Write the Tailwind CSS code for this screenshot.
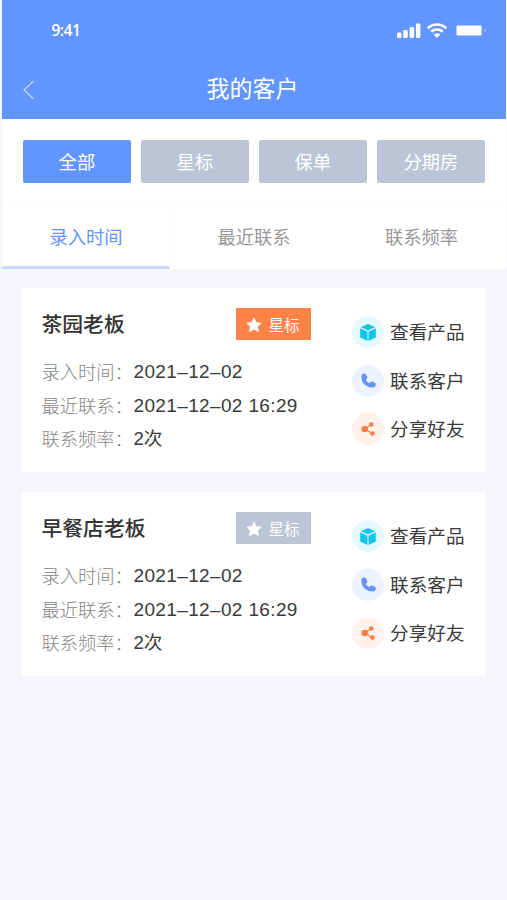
<!DOCTYPE html>
<html lang="zh-CN">
<head>
  <meta charset="UTF-8" />
  <meta name="viewport" content="width=device-width, initial-scale=1.0" />
  <title>我的客户</title>
  <script src="https://cdn.jsdelivr.net/npm/@tailwindcss/browser@4"></script>
</head>
<body class="bg-[#f4f6fb] font-['Noto_Sans_CJK_SC',sans-serif] text-[#333]">
  <!-- Shared icons -->
  <svg class="hidden">
    <symbol id="star" viewBox="0 0 16 16"><path fill="currentColor" stroke="currentColor" stroke-linejoin="round" d="M8 1l2.1 4.6 5 .6-3.7 3.4 1 4.9L8 12.1l-4.4 2.4 1-4.9L.9 6.2l5-.6z" /></symbol>
    <symbol id="box" viewBox="0 0 16 17"><path fill="currentColor" d="M8 0l7.200 3.200L8 6.600.8 3.200zM.2 4.300l7.300 3.400V17L.2 13.600zM15.800 4.300L8.500 7.700V17l7.300-3.400z" /></symbol>
    <symbol id="phone" viewBox="0 0 16 16"><path fill="none" stroke="currentColor" stroke-width="4" stroke-linecap="round" d="M2.500 4.500c0 5 4 9 9.500 9" /><path fill="none" stroke="currentColor" stroke-width="5.200" stroke-linecap="round" d="M3.300 3.200l.8 1.600M11.400 11.800l1.700.8" /></symbol>
    <symbol id="share" viewBox="0 0 14 14"><path fill="none" stroke="currentColor" stroke-width="1.200" d="M10.500 2.300L4 7l7 4.500" /><g fill="currentColor"><circle cx="3.700" cy="7" r="3.200" /><circle cx="10.300" cy="2.500" r="2.300" /><circle cx="11.400" cy="11.500" r="2.300" /></g></symbol>
  </svg>

  <div class="mx-auto h-[900px] w-[504px]">
    <!-- Header -->
    <header class="h-[119px] bg-[#6295ff] text-white">
      <div class="flex h-[60px] items-center justify-between pl-[50px] pr-[19px] pt-px">
        <span class="font-['Open_Sans',sans-serif] text-[15.5px] font-semibold tracking-[-0.5px]">9:41</span>
        <div class="flex items-center gap-[6px]">
          <svg class="h-[15px] w-6" viewBox="0 0 24 15" fill="currentColor">
            <rect x="0" y="9.500" width="4.500" height="5.500" rx="1.300" />
            <rect x="6.300" y="7" width="4.500" height="8" rx="1.300" />
            <rect x="12.600" y="4" width="4.500" height="11" rx="1.300" />
            <rect x="18.900" y="0.500" width="4.500" height="14.500" rx="1.300" />
          </svg>
          <svg class="h-[15px] w-5" viewBox="0 0 20 15" fill="none" stroke="currentColor" stroke-width="2.600">
            <path d="M.9 5.300C6 .300 14 .300 19.100 5.300" />
            <path d="M4.200 8.800c3.300-3.200 8.300-3.200 11.600 0" />
            <path fill="currentColor" stroke="none" d="M6.700 11.400c2-1.600 4.600-1.600 6.600 0L10 15z" />
          </svg>
          <svg class="h-[15px] w-[34px]" viewBox="0 0 34 15">
            <rect x="1" y=".5" width="29" height="14" rx="3" fill="none" stroke="#6b9bff" />
            <rect x="3.500" y="2.500" width="25" height="10" rx="1" fill="#fff" />
            <path d="M31.500 5.500c1.800.7 1.800 3.300 0 4z" fill="#a8c4ff" />
          </svg>
        </div>
      </div>
      <div class="grid h-[55px] grid-cols-[1fr_auto_1fr] items-center">
        <svg class="ml-[21px] mt-[5px] h-5 w-3" viewBox="0 0 12 20" fill="none" stroke="#c5d7ff" stroke-width="1.200"><path d="M10.500 1L1 10l9.500 9" /></svg>
        <h1 class="-ml-0.5 text-[23px]">我的客户</h1>
      </div>
    </header>

    <!-- Filters -->
    <nav class="grid h-[87px] grid-cols-4 gap-[10px] bg-white pl-[21.400px] pr-[20.600px] pt-[21.400px] text-[18.300px] text-white">
      <button class="h-[43px] rounded-[2px] bg-[#6295ff]">全部</button>
      <button class="h-[43px] rounded-[2px] bg-[#bcc5d8]">星标</button>
      <button class="h-[43px] rounded-[2px] bg-[#bcc5d8]">保单</button>
      <button class="h-[43px] rounded-[2px] bg-[#bcc5d8]">分期房</button>
    </nav>

    <!-- Sort tabs -->
    <div class="grid h-[63px] grid-cols-3 border-t border-[#fafafc] bg-white text-[18.300px] text-[#999]">
      <button class="border-b-[3px] border-r border-r-[#fafafc] border-b-[#c6d8fd] pt-px pl-0.5 text-[#6295ff]">录入时间</button>
      <button class="border-b-[3px] border-transparent pt-px pl-px">最近联系</button>
      <button class="border-b-[3px] border-transparent pt-px">联系频率</button>
    </div>

    <!-- Customers -->
    <main class="flex flex-col gap-5 px-5 pt-[19px]">
      <section class="flex h-[184px] justify-between rounded-[2px] bg-white pl-5 pr-[21px] pt-5">
        <div class="w-[269px]">
          <div class="flex items-start justify-between">
            <h2 class="text-[20.800px] leading-[30px] font-medium">茶园老板</h2>
            <span class="flex h-8 w-[75px] items-center justify-center gap-[6px] bg-[#ff8346] pt-px text-[15.500px] text-white"><svg class="size-4"><use href="#star" /></svg>星标</span>
          </div>
          <dl class="mt-[15px] grid grid-cols-[92px_1fr] text-[18.300px] leading-[33.500px] whitespace-nowrap">
            <dt class="font-light text-[#858585]">录入时间：</dt><dd class="font-['Liberation_Sans','Noto_Sans_CJK_SC',sans-serif] text-[19px] tracking-[0.36px] text-[#3a3a3a]">2021–12–02</dd>
            <dt class="font-light text-[#858585]">最近联系：</dt><dd class="font-['Liberation_Sans','Noto_Sans_CJK_SC',sans-serif] text-[19px] tracking-[0.36px] text-[#3a3a3a]">2021–12–02 16:29</dd>
            <dt class="font-light text-[#858585]">联系频率：</dt><dd class="font-['Liberation_Sans','Noto_Sans_CJK_SC',sans-serif] text-[18.600px] text-[#3a3a3a]">2次</dd>
          </dl>
        </div>
        <ul class="flex flex-col gap-[16.500px] pt-2 text-[18.600px] leading-[30px] text-[#3a3a3a]">
          <li class="flex h-8 items-start gap-[6px]"><span class="flex size-8 items-center justify-center rounded-full bg-[#e3fafd] text-[#13c4e8]"><svg class="h-[17px] w-4"><use href="#box" /></svg></span>查看产品</li>
          <li class="flex h-8 items-start gap-[6px]"><span class="flex size-8 items-center justify-center rounded-full bg-[#edf2ff] text-[#6295ff]"><svg class="size-[15px]"><use href="#phone" /></svg></span>联系客户</li>
          <li class="flex h-8 items-start gap-[6px]"><span class="flex size-8 items-center justify-center rounded-full bg-[#fff1eb] text-[#ff7b42]"><svg class="size-[14px]"><use href="#share" /></svg></span>分享好友</li>
        </ul>
      </section>

      <section class="flex h-[184px] justify-between rounded-[2px] bg-white pl-5 pr-[21px] pt-5">
        <div class="w-[269px]">
          <div class="flex items-start justify-between">
            <h2 class="text-[20.800px] leading-[30px] font-medium">早餐店老板</h2>
            <span class="flex h-8 w-[75px] items-center justify-center gap-[6px] bg-[#bcc5d8] pt-px text-[15.500px] text-white"><svg class="size-4"><use href="#star" /></svg>星标</span>
          </div>
          <dl class="mt-[15px] grid grid-cols-[92px_1fr] text-[18.300px] leading-[33.500px] whitespace-nowrap">
            <dt class="font-light text-[#858585]">录入时间：</dt><dd class="font-['Liberation_Sans','Noto_Sans_CJK_SC',sans-serif] text-[19px] tracking-[0.36px] text-[#3a3a3a]">2021–12–02</dd>
            <dt class="font-light text-[#858585]">最近联系：</dt><dd class="font-['Liberation_Sans','Noto_Sans_CJK_SC',sans-serif] text-[19px] tracking-[0.36px] text-[#3a3a3a]">2021–12–02 16:29</dd>
            <dt class="font-light text-[#858585]">联系频率：</dt><dd class="font-['Liberation_Sans','Noto_Sans_CJK_SC',sans-serif] text-[18.600px] text-[#3a3a3a]">2次</dd>
          </dl>
        </div>
        <ul class="flex flex-col gap-[16.500px] pt-2 text-[18.600px] leading-[30px] text-[#3a3a3a]">
          <li class="flex h-8 items-start gap-[6px]"><span class="flex size-8 items-center justify-center rounded-full bg-[#e3fafd] text-[#13c4e8]"><svg class="h-[17px] w-4"><use href="#box" /></svg></span>查看产品</li>
          <li class="flex h-8 items-start gap-[6px]"><span class="flex size-8 items-center justify-center rounded-full bg-[#edf2ff] text-[#6295ff]"><svg class="size-[15px]"><use href="#phone" /></svg></span>联系客户</li>
          <li class="flex h-8 items-start gap-[6px]"><span class="flex size-8 items-center justify-center rounded-full bg-[#fff1eb] text-[#ff7b42]"><svg class="size-[14px]"><use href="#share" /></svg></span>分享好友</li>
        </ul>
      </section>
    </main>
  </div>
</body>
</html>
